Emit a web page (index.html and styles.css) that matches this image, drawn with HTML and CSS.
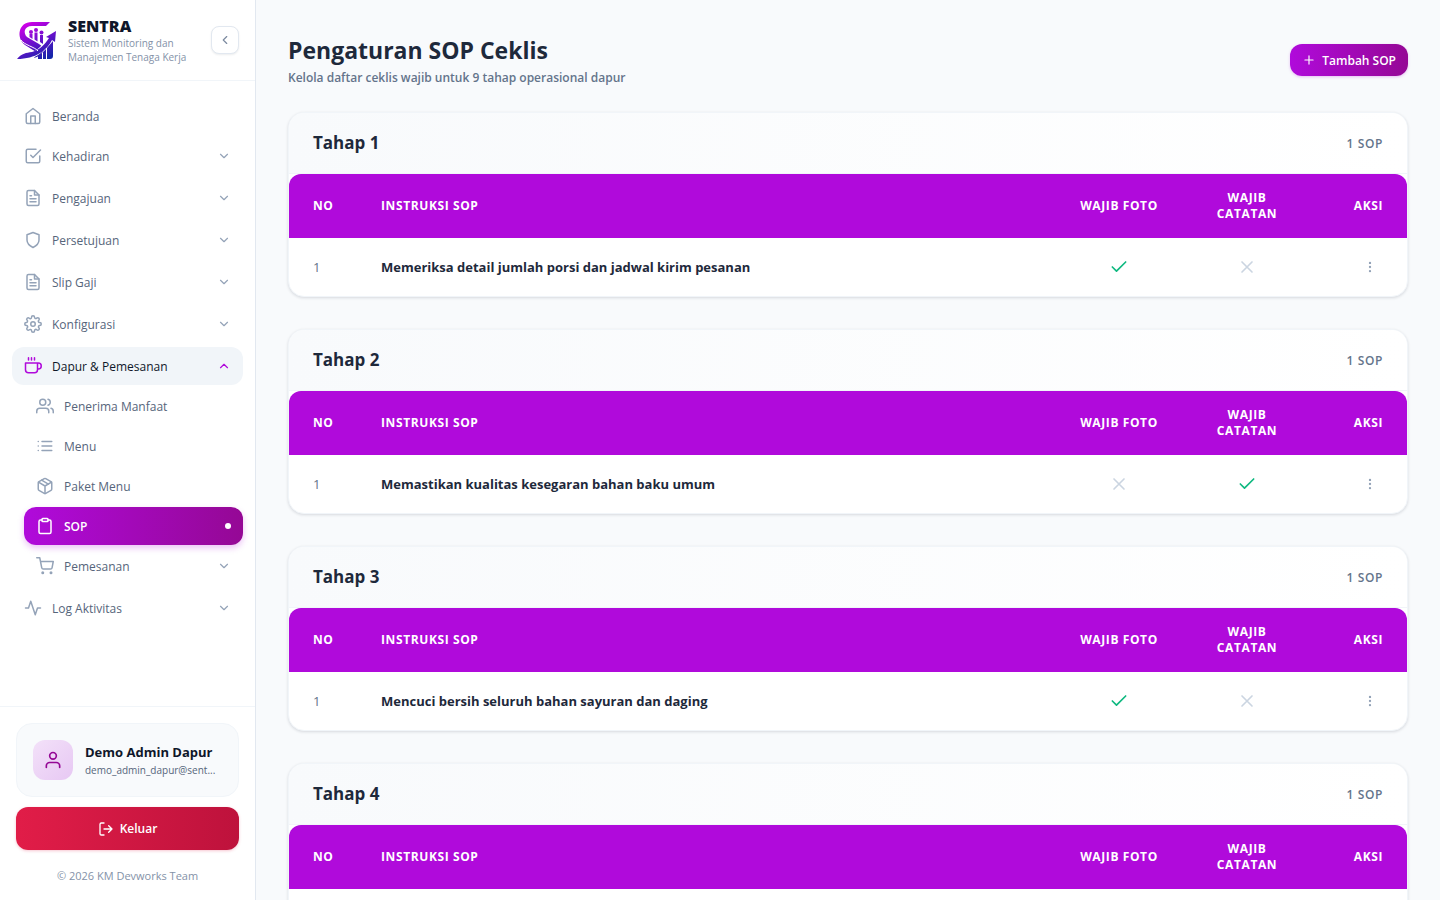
FILE: index.html
```html
<!DOCTYPE html>
<html lang="id">
<head>
<meta charset="utf-8">
<meta name="viewport" content="width=device-width, initial-scale=1">
<title>Pengaturan SOP Ceklis - SENTRA</title>
<link rel="stylesheet" href="styles.css">
</head>
<body>
<svg class="sprite" aria-hidden="true">
  <symbol id="chevron" viewBox="0 0 24 24"><path d="m6 9 6 6 6-6"/></symbol>
  <symbol id="file" viewBox="0 0 24 24"><path d="M14 2H6a2 2 0 0 0-2 2v16a2 2 0 0 0 2 2h12a2 2 0 0 0 2-2V8z"/><path d="M14 2v6h6M16 13H8M16 17H8M10 9H8"/></symbol>
  <symbol id="check" viewBox="0 0 24 24"><path d="M20 6 9 17l-5-5"/></symbol>
  <symbol id="cross" viewBox="0 0 24 24"><path d="M18 6 6 18M6 6l12 12"/></symbol>
  <symbol id="dots" viewBox="0 0 24 24"><circle cx="12" cy="12" r="1"/><circle cx="12" cy="5" r="1"/><circle cx="12" cy="19" r="1"/></symbol>
</svg>
<div class="app">
  <aside class="sidebar">
    <div class="brand">
      <svg class="logo" viewBox="0 0 40 40" aria-hidden="true">
        <defs><linearGradient id="lg" gradientUnits="userSpaceOnUse" x1="14" y1="2" x2="32" y2="38"><stop offset="0" stop-color="#cc00e6"/><stop offset=".5" stop-color="#6a10cc"/><stop offset="1" stop-color="#1226a8"/></linearGradient></defs>
        <g fill="url(#lg)">
          <path d="M34 2 30 6H16C8 6 7 13 11 17l12 7c5 3 6 7 2 10-2 2-4 3-7 4 3-4 3-6-1-8L9 25C0 18 2 2 16 2z"/>
          <circle cx="15" cy="12" r="2"/><circle cx="20" cy="10" r="2"/><circle cx="25.500" cy="12.500" r="2"/>
          <path d="M13.500 14h3v5l-3-2zM18.500 12.500h3v9l-3-2zM24 15h3v9l-3-2z"/>
          <path d="M22 35l4-2v6h-4zM27 32l3-3v10h-3zM31 28l6-7v15c0 2-1 3-3 3h-3z"/>
        </g>
        <path d="M4 38c14-1 23-7 31-22" fill="none" stroke="#fff" stroke-width="5"/>
        <path d="M1 39c5-6 9-6 15-7 8-2 13-8 17-14l-3-1 10-6-1 11-3-2C31 30 20 39 1 39z" fill="url(#lg)"/>
        <path d="M5 20c3 5 14 7 17 11" fill="none" stroke="#fff" stroke-width="1"/>
      </svg>
      <div class="brand-text">
        <strong class="brand-name">SENTRA</strong>
        <span class="brand-sub">Sistem Monitoring dan Manajemen Tenaga Kerja</span>
      </div>
      <button class="collapse" type="button" aria-label="Ciutkan menu"><svg class="icon i14" viewBox="0 0 24 24"><path d="m15 18-6-6 6-6"/></svg></button>
    </div>
    <nav class="nav">
      <a class="item" href="#"><svg class="icon" viewBox="0 0 24 24"><path d="m3 9 9-7 9 7v11a2 2 0 0 1-2 2H5a2 2 0 0 1-2-2z"/><path d="M9 22V12h6v10"/></svg>Beranda</a>
      <div class="groups">
        <button class="item" type="button"><svg class="icon" viewBox="0 0 24 24"><path d="m9 11 3 3L22 4"/><path d="M21 12v7a2 2 0 0 1-2 2H5a2 2 0 0 1-2-2V5a2 2 0 0 1 2-2h11"/></svg>Kehadiran<svg class="icon chev"><use href="#chevron"/></svg></button>
        <button class="item" type="button"><svg class="icon"><use href="#file"/></svg>Pengajuan<svg class="icon chev"><use href="#chevron"/></svg></button>
        <button class="item" type="button"><svg class="icon" viewBox="0 0 24 24"><path d="M12 22s8-4 8-10V5l-8-3-8 3v7c0 6 8 10 8 10z"/></svg>Persetujuan<svg class="icon chev"><use href="#chevron"/></svg></button>
        <button class="item" type="button"><svg class="icon"><use href="#file"/></svg>Slip Gaji<svg class="icon chev"><use href="#chevron"/></svg></button>
        <button class="item" type="button"><svg class="icon" viewBox="0 0 24 24"><circle cx="12" cy="12" r="3"/><path d="M19.400 15a1.650 1.650 0 0 0 .33 1.820l.06.06a2 2 0 1 1-2.830 2.830l-.06-.06a1.650 1.650 0 0 0-2.820 1.170V21a2 2 0 0 1-4 0v-.09A1.650 1.650 0 0 0 9 19.400a1.650 1.650 0 0 0-1.820.33l-.06.06a2 2 0 1 1-2.830-2.830l.06-.06A1.650 1.650 0 0 0 3.090 14H3a2 2 0 0 1 0-4h.09A1.650 1.650 0 0 0 4.600 9a1.650 1.650 0 0 0-.33-1.820l-.06-.06a2 2 0 1 1 2.830-2.830l.06.06A1.650 1.650 0 0 0 10 3.090V3a2 2 0 0 1 4 0v.09a1.650 1.650 0 0 0 2.820 1.170l.06-.06a2 2 0 1 1 2.830 2.830l-.06.06A1.650 1.650 0 0 0 20.910 10H21a2 2 0 0 1 0 4h-.09a1.650 1.650 0 0 0-1.510 1z"/></svg>Konfigurasi<svg class="icon chev"><use href="#chevron"/></svg></button>
        <div class="group">
          <button class="item open" type="button" aria-expanded="true"><svg class="icon" viewBox="0 0 24 24"><path d="M18 8h1a4 4 0 0 1 0 8h-1M2 8h16v9a4 4 0 0 1-4 4H6a4 4 0 0 1-4-4zM6 1v3M10 1v3M14 1v3"/></svg>Dapur &amp; Pemesanan<svg class="icon chev up"><use href="#chevron"/></svg></button>
          <div class="sub">
            <a class="item" href="#"><svg class="icon" viewBox="0 0 24 24"><path d="M17 21v-2a4 4 0 0 0-4-4H5a4 4 0 0 0-4 4v2"/><circle cx="9" cy="7" r="4"/><path d="M23 21v-2a4 4 0 0 0-3-3.870M16 3.130a4 4 0 0 1 0 7.750"/></svg>Penerima Manfaat</a>
            <a class="item" href="#"><svg class="icon" viewBox="0 0 24 24"><path d="M8 6h13M8 12h13M8 18h13M3 6h.01M3 12h.01M3 18h.01"/></svg>Menu</a>
            <a class="item" href="#"><svg class="icon" viewBox="0 0 24 24"><path d="m16.500 9.400-9-5.190"/><path d="M21 16V8a2 2 0 0 0-1-1.730l-7-4a2 2 0 0 0-2 0l-7 4A2 2 0 0 0 3 8v8a2 2 0 0 0 1 1.730l7 4a2 2 0 0 0 2 0l7-4A2 2 0 0 0 21 16z"/><path d="M3.270 6.960 12 12.010l8.730-5.050M12 22.080V12"/></svg>Paket Menu</a>
            <a class="item active" href="#" aria-current="page"><svg class="icon" viewBox="0 0 24 24"><path d="M16 4h2a2 2 0 0 1 2 2v14a2 2 0 0 1-2 2H6a2 2 0 0 1-2-2V6a2 2 0 0 1 2-2h2"/><rect x="8" y="2" width="8" height="4" rx="1"/></svg>SOP<span class="dot"></span></a>
            <button class="item" type="button"><svg class="icon" viewBox="0 0 24 24"><circle cx="9" cy="21" r="1"/><circle cx="20" cy="21" r="1"/><path d="M1 1h4l2.680 13.390a2 2 0 0 0 2 1.610h9.720a2 2 0 0 0 2-1.610L23 6H6"/></svg>Pemesanan<svg class="icon chev"><use href="#chevron"/></svg></button>
          </div>
        </div>
        <button class="item" type="button"><svg class="icon" viewBox="0 0 24 24"><path d="M22 12h-4l-3 9L9 3l-3 9H2"/></svg>Log Aktivitas<svg class="icon chev"><use href="#chevron"/></svg></button>
      </div>
    </nav>
    <div class="side-foot">
      <div class="user">
        <span class="avatar"><svg class="icon i20" viewBox="0 0 24 24"><path d="M20 21v-2a4 4 0 0 0-4-4H8a4 4 0 0 0-4 4v2"/><circle cx="12" cy="7" r="4"/></svg></span>
        <div class="user-text">
          <strong class="user-name">Demo Admin Dapur</strong>
          <span class="user-mail">demo_admin_dapur@sent...</span>
        </div>
      </div>
      <button class="logout" type="button"><svg class="icon i16" viewBox="0 0 24 24"><path d="M9 21H5a2 2 0 0 1-2-2V5a2 2 0 0 1 2-2h4M16 17l5-5-5-5M21 12H9"/></svg>Keluar</button>
      <p class="copy">© 2026 KM Devworks Team</p>
    </div>
  </aside>
  <main class="main">
    <header class="page-head">
      <div>
        <h1 class="title">Pengaturan SOP Ceklis</h1>
        <p class="subtitle">Kelola daftar ceklis wajib untuk 9 tahap operasional dapur</p>
      </div>
      <button class="add" type="button"><svg class="icon i14" viewBox="0 0 24 24"><path d="M12 5v14M5 12h14"/></svg>Tambah SOP</button>
    </header>
    <section class="card">
      <div class="card-head"><h2 class="card-title">Tahap 1</h2><span class="count">1 SOP</span></div>
      <table class="table">
        <thead><tr><th class="c-no">No</th><th>Instruksi SOP</th><th class="c-flag">Wajib Foto</th><th class="c-flag">Wajib Catatan</th><th class="c-act">Aksi</th></tr></thead>
        <tbody><tr><td class="c-no">1</td><td class="sop">Memeriksa detail jumlah porsi dan jadwal kirim pesanan</td><td class="c-flag"><svg class="icon yes"><use href="#check"/></svg></td><td class="c-flag"><svg class="icon no"><use href="#cross"/></svg></td><td class="c-act"><button class="more" type="button" aria-label="Aksi"><svg class="icon i14"><use href="#dots"/></svg></button></td></tr></tbody>
      </table>
    </section>
    <section class="card">
      <div class="card-head"><h2 class="card-title">Tahap 2</h2><span class="count">1 SOP</span></div>
      <table class="table">
        <thead><tr><th class="c-no">No</th><th>Instruksi SOP</th><th class="c-flag">Wajib Foto</th><th class="c-flag">Wajib Catatan</th><th class="c-act">Aksi</th></tr></thead>
        <tbody><tr><td class="c-no">1</td><td class="sop">Memastikan kualitas kesegaran bahan baku umum</td><td class="c-flag"><svg class="icon no"><use href="#cross"/></svg></td><td class="c-flag"><svg class="icon yes"><use href="#check"/></svg></td><td class="c-act"><button class="more" type="button" aria-label="Aksi"><svg class="icon i14"><use href="#dots"/></svg></button></td></tr></tbody>
      </table>
    </section>
    <section class="card">
      <div class="card-head"><h2 class="card-title">Tahap 3</h2><span class="count">1 SOP</span></div>
      <table class="table">
        <thead><tr><th class="c-no">No</th><th>Instruksi SOP</th><th class="c-flag">Wajib Foto</th><th class="c-flag">Wajib Catatan</th><th class="c-act">Aksi</th></tr></thead>
        <tbody><tr><td class="c-no">1</td><td class="sop">Mencuci bersih seluruh bahan sayuran dan daging</td><td class="c-flag"><svg class="icon yes"><use href="#check"/></svg></td><td class="c-flag"><svg class="icon no"><use href="#cross"/></svg></td><td class="c-act"><button class="more" type="button" aria-label="Aksi"><svg class="icon i14"><use href="#dots"/></svg></button></td></tr></tbody>
      </table>
    </section>
    <section class="card">
      <div class="card-head"><h2 class="card-title">Tahap 4</h2><span class="count">1 SOP</span></div>
      <table class="table">
        <thead><tr><th class="c-no">No</th><th>Instruksi SOP</th><th class="c-flag">Wajib Foto</th><th class="c-flag">Wajib Catatan</th><th class="c-act">Aksi</th></tr></thead>
        <tbody><tr><td class="c-no"></td><td class="sop"></td><td class="c-flag"></td><td class="c-flag"></td><td class="c-act"></td></tr></tbody>
      </table>
    </section>
  </main>
</div>
</body>
</html>
```
FILE: styles.css
```css
* { box-sizing: border-box; }
body { margin: 0; font-family: "Open Sans", "Noto Sans", sans-serif; background: #f8fafc; color: #1e293b; }
button { font: inherit; border: 0; background: none; padding: 0; cursor: pointer; }
h1, h2, p { margin: 0; }
.sprite { display: none; }
.app { display: flex; height: 100vh; overflow: hidden; }

.icon { width: 18px; height: 18px; flex: none; fill: none; stroke: currentColor; stroke-width: 2; stroke-linecap: round; stroke-linejoin: round; }
.i14 { width: 14px; height: 14px; }
.i16 { width: 16px; height: 16px; }
.i20 { width: 20px; height: 20px; }

.sidebar { width: 256px; flex: none; display: flex; flex-direction: column; background: #fff; border-right: 1px solid #e2e8f0; }
.brand { display: flex; align-items: center; gap: 12px; height: 81px; padding: 0 16px; border-bottom: 1px solid #f1f5f9; }
.logo { width: 40px; height: 40px; flex: none; }
.brand-text { flex: 1; min-width: 0; display: flex; flex-direction: column; }
.brand-name { font-family: "Noto Sans", sans-serif; font-size: 16px; line-height: 20px; font-weight: 900; color: #0f172a; }
.brand-sub { font-size: 10px; line-height: 14px; font-weight: 500; color: #8492a8; }
.collapse { width: 28px; height: 28px; flex: none; display: grid; place-items: center; border: 1px solid #e2e8f0; border-radius: 8px; background: #fff; color: #7c8aa0; box-shadow: 0 1px 2px rgba(15, 23, 42, .08); }

.nav { flex: 1; min-height: 0; overflow: hidden; padding: 16px 12px; display: flex; flex-direction: column; gap: 2px; }
.groups { display: flex; flex-direction: column; gap: 4px; }
.group, .sub { display: flex; flex-direction: column; gap: 2px; }
.sub { padding-left: 12px; }
.item { display: flex; align-items: center; gap: 10px; width: 100%; height: 38px; padding: 0 12px; border-radius: 12px; font-size: 12px; font-weight: 500; color: #56657b; text-align: left; text-decoration: none; }
.item .icon { color: #94a3b8; }
.item .chev { width: 14px; height: 14px; margin-left: auto; }
.item.open { background: #f1f5f9; color: #0f172a; }
.item.open .icon { color: #b00adb; }
.item .up { transform: rotate(180deg); }
.item.active { background: linear-gradient(90deg, #b00adb, #950895); color: #fff; font-weight: 600; box-shadow: 0 3px 6px rgba(176, 10, 219, .25); }
.item.active .icon { color: #fff; }
.dot { width: 6px; height: 6px; border-radius: 50%; background: #fff; margin-left: auto; }

.side-foot { padding: 16px; border-top: 1px solid #f1f5f9; }
.user { display: flex; align-items: center; gap: 12px; padding: 16px; border: 1px solid #f1f5f9; border-radius: 16px; background: #f8fafc; }
.avatar { width: 40px; height: 40px; flex: none; display: grid; place-items: center; border-radius: 12px; background: linear-gradient(135deg, #f3e1f9, #e7c8f3); color: #950895; }
.user-text { min-width: 0; display: flex; flex-direction: column; }
.user-name { font-size: 13px; line-height: 20px; font-weight: 700; color: #0f172a; white-space: nowrap; }
.user-mail { font-size: 10px; line-height: 16px; color: #56657b; white-space: nowrap; }
.logout { display: flex; align-items: center; justify-content: center; gap: 6px; width: 100%; height: 43px; margin-top: 10px; border-radius: 12px; background: linear-gradient(90deg, #e11d48, #be123c); color: #fff; font-size: 12px; font-weight: 600; box-shadow: 0 1px 3px rgba(225, 29, 72, .25); }
.copy { margin-top: 18px; text-align: center; font-size: 11px; line-height: 16px; font-weight: 500; color: #8492a8; }

.main { flex: 1; min-width: 0; padding: 32px; overflow-y: auto; scrollbar-width: none; }
.page-head { display: flex; align-items: center; justify-content: space-between; margin-bottom: 24px; }
.title { font-size: 23px; line-height: 36px; font-weight: 700; }
.subtitle { font-size: 12px; line-height: 20px; font-weight: 600; color: #64748b; }
.add { display: flex; align-items: center; gap: 6px; height: 32px; padding: 0 12px; border-radius: 12px; background: linear-gradient(90deg, #b00adb, #950895); color: #fff; font-size: 12px; font-weight: 600; box-shadow: 0 1px 3px rgba(176, 10, 219, .25); }

.card { margin-bottom: 32px; background: #fff; border: 1px solid #f1f5f9; border-radius: 16px; overflow: hidden; box-shadow: 0 1px 3px rgba(15, 23, 42, .14); }
.card-head { display: flex; align-items: center; justify-content: space-between; height: 61px; padding: 0 24px; border-bottom: 1px solid #f1f5f9; background: linear-gradient(90deg, #f8fafc, #fff); }
.card-title { font-size: 17px; line-height: 28px; font-weight: 700; }
.count { font-size: 12px; font-weight: 600; letter-spacing: 0.05em; color: #64748b; }
.table { width: 100%; border-spacing: 0; table-layout: fixed; }
.table th { height: 64px; padding: 0 24px; background: #b00adb; color: #fff; font-size: 12px; line-height: 16px; font-weight: 700; letter-spacing: 0.05em; text-transform: uppercase; text-align: left; }
.table th:first-child { border-top-left-radius: 12px; }
.table th:last-child { border-top-right-radius: 12px; }
.table td { height: 58px; padding: 0 24px; font-size: 13px; }
.table .c-no { width: 68px; padding-right: 0; }
.table td.c-no { color: #64748b; font-weight: 500; }
.table .sop { font-weight: 700; }
.table .c-flag { width: 128px; text-align: center; }
.table .c-act { width: 96px; text-align: right; }
.c-flag .icon { display: block; width: 20px; height: 20px; margin: 0 auto; }
.yes { color: #10b981; }
.no { color: #cbd5e1; }
.more { display: inline-grid; place-items: center; width: 26px; height: 26px; vertical-align: middle; color: #94a3b8; }
```
